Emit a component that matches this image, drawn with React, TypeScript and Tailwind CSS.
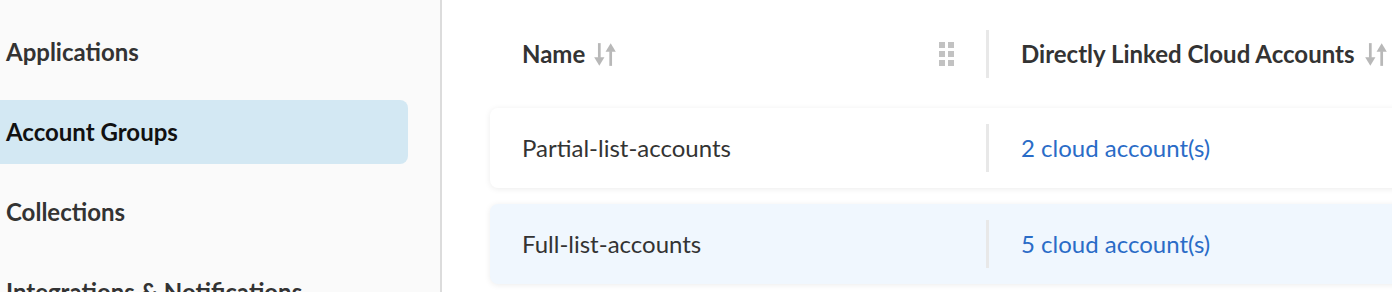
import React from 'react';

const navItems = ['Applications', 'Account Groups', 'Collections', 'Integrations & Notifications'];

const rows = [
  { name: 'Partial-list-accounts', count: 2, highlight: false },
  { name: 'Full-list-accounts', count: 5, highlight: true },
];

// down arrow on the left, up arrow on the right, filled heads
const SortIcon = () => (
  <svg width="22" height="25" viewBox="0 0 19 22" fill="#b8b8b8" stroke="#b8b8b8" strokeWidth="2.4">
    <path d="M4.5 1v13" fill="none" />
    <path d="M0 13.5h9L4.5 21z" stroke="none" />
    <path d="M14.5 21V8" fill="none" />
    <path d="M10 8.5h9L14.5 1z" stroke="none" />
  </svg>
);

const DragHandle = () => (
  <div className="grid grid-cols-2 gap-[3px]">
    {[...Array(6)].map((_, i) => (
      <div key={i} className="w-[6px] h-[6px] bg-[#c2c2c2]" />
    ))}
  </div>
);

export default function App() {
  return (
    <div className="flex w-[1392px] h-[292px] overflow-hidden bg-white font-['Lato','Liberation_Sans',sans-serif]">
      <aside className="w-[442px] shrink-0 bg-[#fafafa] border-r-2 border-[#dcdcdc] pt-5 pr-8 flex flex-col gap-4">
        {navItems.map((item) => (
          <div
            key={item}
            className={
              'h-16 shrink-0 flex items-center pl-[6px] rounded-r-lg text-[24px] font-bold whitespace-nowrap ' +
              (item === 'Account Groups' ? 'bg-[#d3e8f3] text-[#111]' : 'text-[#333]')
            }
          >
            {item}
          </div>
        ))}
      </aside>

      <main className="flex-1 min-w-0 pl-12 pt-[30px]">
        <div className="w-[1100px]">
          <div className="flex h-12 items-center">
            <div className="w-[496px] flex items-center pl-8 pr-[32px] justify-between">
              <div className="flex items-center gap-[9px]">
                <span className="text-[24px] font-bold text-[#333]">Name</span>
                <SortIcon />
              </div>
              <DragHandle />
            </div>
            <div className="w-[3px] h-12 bg-[#e8e8e8]" />
            <div className="flex items-center gap-[10px] pl-8">
              <span className="text-[24px] font-bold text-[#333] whitespace-nowrap">Directly Linked Cloud Accounts</span>
              <SortIcon />
            </div>
          </div>

          <div className="mt-[30px] flex flex-col gap-4">
            {rows.map((row) => (
              <div
                key={row.name}
                className={
                  'h-20 flex items-center rounded-lg shadow-[0_1px_6px_rgba(0,0,0,0.08)] ' +
                  (row.highlight ? 'bg-[#f0f7fe]' : 'bg-white')
                }
              >
                <div className="w-[496px] pl-8 text-[24px] text-[#333]">{row.name}</div>
                <div className="w-[3px] h-12 bg-[#e8e8e8]" />
                <div className="pl-8 text-[24px] text-[#2a6cc7] whitespace-nowrap">{row.count} cloud account(s)</div>
              </div>
            ))}
          </div>
        </div>
      </main>
    </div>
  );
}
